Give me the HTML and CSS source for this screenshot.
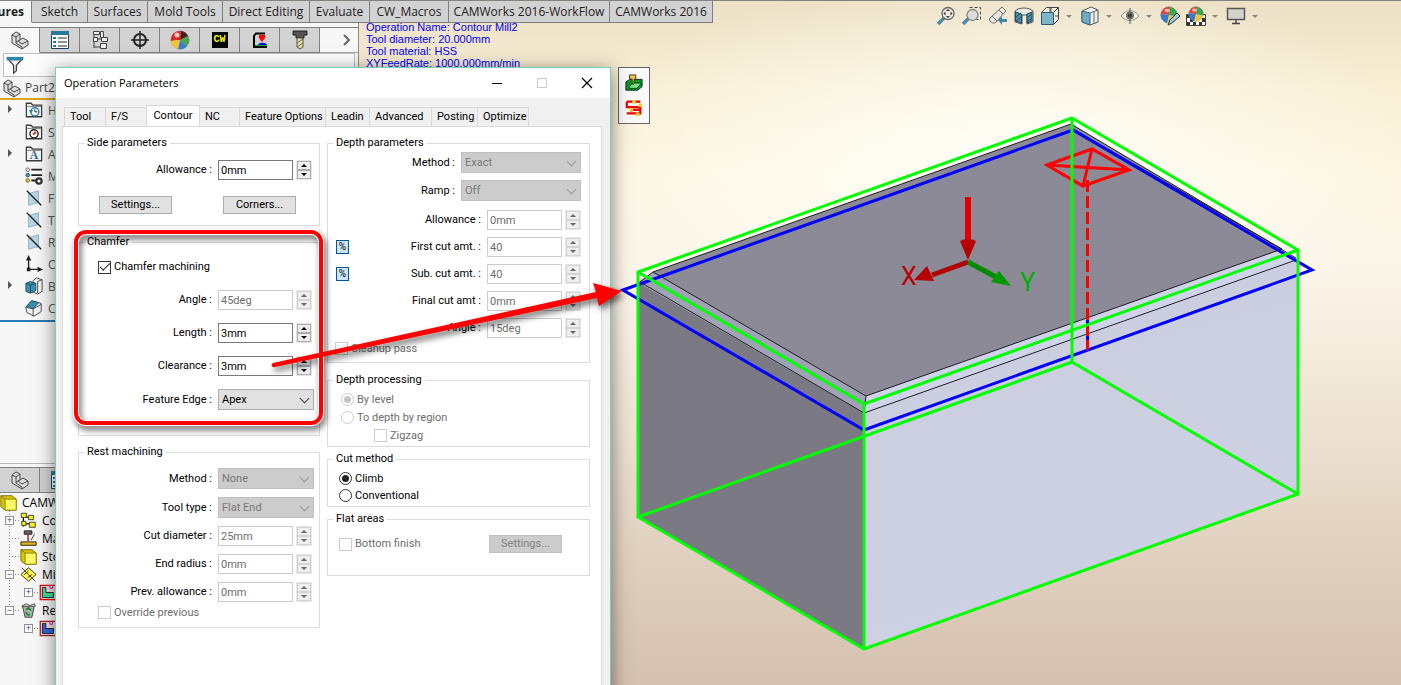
FILE: index.html
```html
<!DOCTYPE html>
<html lang="en">
<head>
    <meta charset="UTF-8">
    <title>Operation Parameters</title>
    <link rel="stylesheet" href="styles.css">
</head>
<body>
<!-- shared icons -->
<svg class="defs" aria-hidden="true">
    <symbol id="i-part" viewBox="0 0 20 20">
        <path d="M2 5l4-3 4 2v6l3-2 5 3v4l-6 4-10-6z" fill="#dcdcdc" stroke="#4a4a4a" stroke-linejoin="round"/>
        <path d="M2 5l4 2v6l6 4v2M6 7l4-3M6 12l4-2M12 14l6-3M12 14l-4-3" fill="none" stroke="#4a4a4a"/>
    </symbol>
    <symbol id="i-list" viewBox="0 0 20 20">
        <path d="M1.500 1.500h17v17h-17z" fill="#fff" stroke="#1d4257"/>
        <path d="M1 1h18v4H1z" fill="#2a7899"/>
        <path d="M3 7h3v2H3zM3 11h3v2H3zM3 15h3v2H3z" fill="#2a7899"/>
        <path d="M8 8h9M8 12h9M8 16h9" stroke="#222"/>
    </symbol>
    <symbol id="i-plane" viewBox="0 0 20 20">
        <path d="M4 5l11-3v13L4 18z" fill="#b9d5e4" stroke="#86b2c9"/>
        <path d="M2 2l16 16" stroke="#222" stroke-width="1.500"/>
    </symbol>
    <symbol id="i-folder" viewBox="0 0 20 20">
        <path d="M1.500 17.500v-15h5l2 2h10v13z" fill="#f4f4f4" stroke="#3c3c3c" stroke-width="1.400"/>
        <path d="M2 6h16" stroke="#777"/>
    </symbol>
    <symbol id="i-cube" viewBox="0 0 20 20">
        <path d="M1 2h13l5 4v13H6l-5-4z" fill="#d8c400" stroke="#6d6300"/>
        <path d="M6 6h13v13H6z" fill="#fffb66" stroke="#8a7d00"/>
        <path d="M1 2l5 4" stroke="#6d6300"/>
    </symbol>
    <symbol id="i-mill" viewBox="0 0 20 20">
        <path d="M1.500 1.500h18v17h-18z" fill="#f4dede" stroke="currentColor" stroke-width="1.500"/>
        <path d="M4 4h4v6h9v6H4z" fill="var(--fill)" stroke="#111"/>
        <path d="M13 1v4h3V1" fill="none" stroke="#c0c"/>
    </symbol>
    <symbol id="i-ball" viewBox="0 0 20 20">
        <circle cx="10" cy="10" r="9" fill="#e8e8e8" stroke="#555" stroke-width=".6"/>
        <path d="M10 10L11 1a9 9 0 0 0-10 8z" fill="#d9483c"/>
        <path d="M10 10L1 9a9 9 0 0 0 7 10z" fill="#3978ce"/>
        <path d="M10 10l-2 9a9 9 0 0 0 11-7z" fill="#e5c63c"/>
        <path d="M10 10l9 2A9 9 0 0 0 11 1z" fill="#3fa648"/>
        <ellipse cx="8" cy="5" rx="3" ry="2" fill="#fff" opacity=".6"/>
    </symbol>
</svg>

<div class="app">
    <header class="top">
        <nav class="ribbon">
            <a href="#" class="ribbon-tab active">ures</a>
            <a href="#" class="ribbon-tab">Sketch</a>
            <a href="#" class="ribbon-tab">Surfaces</a>
            <a href="#" class="ribbon-tab">Mold Tools</a>
            <a href="#" class="ribbon-tab">Direct Editing</a>
            <a href="#" class="ribbon-tab">Evaluate</a>
            <a href="#" class="ribbon-tab">CW_Macros</a>
            <a href="#" class="ribbon-tab">CAMWorks 2016-WorkFlow</a>
            <a href="#" class="ribbon-tab">CAMWorks 2016</a>
        </nav>
        <div class="view-tools">
            <button class="tool" aria-label="Zoom to fit">
                <svg viewBox="0 0 20 20"><path d="M2 18l6-6" stroke="#4d8ba6" stroke-width="3.500"/><circle cx="12" cy="7.500" r="6" fill="#eee9da" stroke="#6b6b66" stroke-width="1.300"/><path d="M12 3l2 2h-4zM12 12l2-2h-4zM7.500 7.500l2-2v4zM16.500 7.500l-2-2v4z" fill="#333"/></svg>
            </button>
            <button class="tool" aria-label="Zoom to area">
                <svg viewBox="0 0 20 20"><path d="M7.500 1.500h11v12h-4" fill="none" stroke="#444" stroke-dasharray="3 2"/><path d="M1 18l6-6" stroke="#4d8ba6" stroke-width="3.500"/><circle cx="10.500" cy="9" r="5.500" fill="#d9dcda" stroke="#85857f" stroke-width="1.300"/></svg>
            </button>
            <button class="tool" aria-label="Previous view">
                <svg viewBox="0 0 20 20"><path d="M2 12L14 1l4 4L8 16c-3 3-8-1-6-4z" fill="#e8e6de" stroke="#6b6b66"/><path d="M11 4l4 4M4 10l5 5" stroke="#6b6b66"/><path d="M10 14l4-4v3h5v3h-5v3z" fill="#3f87a6"/></svg>
            </button>
            <button class="tool" aria-label="Section view">
                <svg viewBox="0 0 20 20"><path d="M1 5c4-4 14-4 18 0v11l-6 2V9H8v9l-7-2z" fill="#e9e9e4" stroke="#555"/><path d="M1.500 6l6 2v9l-6-2zM13 8l5-2v9l-5 2z" fill="#4c93b2" stroke="#234b5e"/><path d="M2 11l5-4M2 15l5-4M13 12l5-4M13 16l5-4" stroke="#234b5e"/></svg>
            </button>
            <button class="tool" aria-label="View orientation">
                <svg viewBox="0 0 20 20"><path d="M1.500 6.500l5-5h12v12l-5 5M13.500 6.500l5-5M10 2v5M15 10h4M11 2v16" fill="#f7f2e2" stroke="#444"/><path d="M1.500 6.500h12v12h-12z" fill="#7db5cb" stroke="#2a5c72"/></svg>
            </button>
            <span class="caret"></span>
            <button class="tool" aria-label="Display style">
                <svg viewBox="0 0 20 20"><path d="M2 5l9-4 7 3v12l-8 3-8-3z" fill="#eef2f3" stroke="#555"/><path d="M2 5l8 2v12l-8-3z" fill="#6facc5" stroke="#3a6679"/><path d="M10 7l8-3M14 6v12" stroke="#666"/></svg>
            </button>
            <span class="caret"></span>
            <button class="tool" aria-label="Hide and show items">
                <svg viewBox="0 0 20 20"><path d="M1 10c5-7 13-7 18 0-5 6-13 6-18 0z" fill="#f1efe8" stroke="#99948a"/><circle cx="10" cy="9.500" r="4" fill="#77746d"/><circle cx="10" cy="9.500" r="2" fill="#33312d"/><path d="M10 2v16" stroke="#555"/></svg>
            </button>
            <span class="caret"></span>
            <button class="tool" aria-label="Edit appearance">
                <svg viewBox="0 0 20 20"><use href="#i-ball" width="18" height="18"/><path d="M8 19l2-5 7-7 3 3-8 7z" fill="#9ecbe0" stroke="#333"/></svg>
            </button>
            <button class="tool" aria-label="Apply scene">
                <svg viewBox="0 0 20 20"><path d="M.500 8.500h19v11H.500z" fill="#fff" stroke="#444"/><path d="M1 9h3v3H1zM4 12h3v4H4zM1 16h3v3H1zM7 16h3v3H7zM13 16h3v3h-3zM16 12h3v4h-3zM13 9h3v3h-3z" fill="#333"/><use href="#i-ball" x="2" width="16" height="16"/></svg>
            </button>
            <span class="caret"></span>
            <button class="tool" aria-label="View settings">
                <svg viewBox="0 0 20 20"><path d="M1.500 2.500h17v11h-17z" fill="#d3d2cc" stroke="#555" stroke-width="1.400"/><path d="M10 14v3M6 17.500h8" stroke="#444" stroke-width="1.500"/></svg>
            </button>
            <span class="caret"></span>
        </div>
    </header>

    <div class="work">
        <aside class="sidebar">
            <section class="feature-panel">
                <div class="panel-tabs">
                    <button class="panel-tab active" aria-label="Feature tree"><svg><use href="#i-part"/></svg></button>
                    <button class="panel-tab" aria-label="Properties"><svg><use href="#i-list"/></svg></button>
                    <button class="panel-tab" aria-label="Configurations">
                        <svg viewBox="0 0 20 20"><path d="M4 2v16M4 3h5M4 9h8M4 17h7" stroke="#444" fill="none"/><path d="M3.500 1.500h6v3h-6zM10.500 1.500h3v6h-3zM3.500 7.500h4v4h-4zM11.500 7.500h6v4h-6zM10.500 13.500h6v5h-6z" fill="#eee" stroke="#444"/></svg>
                    </button>
                    <button class="panel-tab" aria-label="Dimensions">
                        <svg viewBox="0 0 20 20"><circle cx="10" cy="10" r="6" fill="none" stroke="#222" stroke-width="2"/><path d="M10 1v18M1 10h18" stroke="#222" stroke-width="1.500"/></svg>
                    </button>
                    <button class="panel-tab" aria-label="Display"><svg viewBox="0 0 20 20"><circle cx="10" cy="10" r="9" fill="#eee" stroke="#666" stroke-width=".6"/><path d="M10 10L1 11a9 9 0 0 1 10-10z" fill="#d92a20"/><path d="M10 10l-9 1a9 9 0 0 0 7 8z" fill="#efc62c"/><path d="M10 10l-2 9a9 9 0 0 0 9-3z" fill="#3b7ecb"/><path d="M10 10l7 6a9 9 0 0 0 1-10z" fill="#4aa74e"/><path d="M10 10l8-4a9 9 0 0 0-7-5z" fill="#4a1a18"/><circle cx="7" cy="5" r="2.500" fill="#fff" opacity=".7"/></svg></button>
                    <button class="panel-tab" aria-label="CAM features"><span class="cw">CW</span></button>
                    <button class="panel-tab" aria-label="CAM operations">
                        <svg viewBox="0 0 20 20"><path d="M2 2h16v16H2z" fill="#d0d0d0"/><path d="M15 3.500H6L4 6v11h13" fill="none" stroke="#000" stroke-width="2"/><path d="M9 5h6v3l-3 4-3-4z" fill="#f00"/><path d="M8 15c1-3 8-3 9 0z" fill="#00f"/><path d="M5 15.500h12" stroke="#0b0" stroke-width="1"/></svg>
                    </button>
                    <button class="panel-tab" aria-label="CAM tools">
                        <svg viewBox="0 0 20 20"><path d="M3 1h14v4h-3v3H6V5H3z" fill="#555" stroke="#222"/><path d="M7 8h6v9l-3 2-3-2z" fill="#e8dfa5" stroke="#554"/><path d="M7 13l6-4M7 17l6-4" stroke="#665"/></svg>
                    </button>
                    <button class="more" aria-label="More"><svg viewBox="0 0 10 12"><path d="M2 1l5 5-5 5" fill="none" stroke="#666" stroke-width="2"/></svg></button>
                </div>
                <div class="filter">
                    <svg viewBox="0 0 20 20"><path d="M1.500 2.500h17l-7 8v6l-3 2.500v-8.500z" fill="#f4f4f4" stroke="#333" stroke-width="1.300"/><path d="M1 1h18v4H1z" fill="#2f86a8"/></svg>
                </div>
                <div class="part-name"><svg><use href="#i-part"/></svg>Part2</div>
                <ul class="tree">
                    <li><i class="expand"></i><svg viewBox="0 0 20 20"><use href="#i-folder"/><circle cx="11" cy="12" r="4.500" fill="#fff" stroke="#2f86a8" stroke-width="1.500"/><path d="M11 9v3h3" fill="none" stroke="#222"/><path d="M4 10l3 4 2-4z" fill="#2f86a8"/></svg>H</li>
                    <li><i></i><svg viewBox="0 0 20 20"><use href="#i-folder"/><circle cx="10" cy="12" r="4.500" fill="#fff" stroke="#222" stroke-width="1.500"/><path d="M9 13l3-3" stroke="#d22" stroke-width="2"/></svg>S</li>
                    <li><i class="expand"></i><svg viewBox="0 0 20 20"><use href="#i-folder"/><text x="10" y="16" class="glyph">A</text></svg>A</li>
                    <li><i></i><svg viewBox="0 0 20 20"><path d="M7 3h12M7 9h12M7 15h5" stroke="#222" stroke-width="2"/><circle cx="3" cy="3" r="2" fill="#fff" stroke="#555"/><circle cx="3" cy="9" r="2" fill="#49a3c9" stroke="#246"/><circle cx="3" cy="15" r="2" fill="#e5b816" stroke="#863"/><circle cx="15.500" cy="15.500" r="3" fill="none" stroke="#333" stroke-width="2.500"/></svg>M</li>
                    <li><i></i><svg><use href="#i-plane"/></svg>F</li>
                    <li><i></i><svg><use href="#i-plane"/></svg>T</li>
                    <li><i></i><svg><use href="#i-plane"/></svg>R</li>
                    <li><i></i><svg viewBox="0 0 20 20"><path d="M4 4v12h12" fill="none" stroke="#222" stroke-width="1.500"/><path d="M4 0l3 6H1zM20 16l-6-3v6zM2 14h4v4H2z" fill="#222"/></svg>O</li>
                    <li><i class="expand"></i><svg viewBox="0 0 20 20"><path d="M9 4l4-3 6 2v13l-5 3-5-2z" fill="#f2f2f2" stroke="#444"/><path d="M14 5v13M14 5l5-2" stroke="#444"/><path d="M1 7l5-2 6 2v8l-6 3-5-2z" fill="#3b8cad" stroke="#1d4d62"/><path d="M1 7l5 2v9M6 9l6-2" fill="none" stroke="#1d4d62"/></svg>B</li>
                    <li><i></i><svg viewBox="0 0 20 20"><path d="M1 9l7-7 10 3v9l-8 5-8-4z" fill="#f1f1f1" stroke="#444"/><path d="M1 9l6-7 8 2-6 7z" fill="#3b8cad" stroke="#1d4d62"/><path d="M9 11l9-5M9 11v8" stroke="#444"/></svg>C</li>
                </ul>
            </section>
            <section class="cam-panel">
                <div class="panel-tabs lower">
                    <button class="panel-tab" aria-label="Feature tree"><svg><use href="#i-part"/></svg></button>
                    <button class="panel-tab" aria-label="Properties"><svg><use href="#i-list"/></svg></button>
                </div>
                <ul class="cam-tree">
                    <li class="root"><svg><use href="#i-cube"/></svg>CAMW</li>
                    <li><button class="pm" aria-label="Expand">+</button><svg viewBox="0 0 20 20"><path d="M4 3v14M4 6h6M4 14h7" stroke="#111" stroke-width="1.500"/><path d="M1.500 1.500h6v5h-6zM10 4h6v5h-6zM2 11h5v5H2zM11 12h7v6h-7z" fill="#f6ee1b" stroke="#333"/></svg>Co</li>
                    <li><i></i><svg viewBox="0 0 20 20"><path d="M5 1h9v4H5z" fill="#666" stroke="#111"/><path d="M9.500 5v8" stroke="#c33" stroke-width="2"/><path d="M1 14h18v4H1z" fill="#e5b31a" stroke="#111"/><path d="M13 12l4-7" stroke="#222"/></svg>Ma</li>
                    <li><i></i><svg><use href="#i-cube"/></svg>Sto</li>
                    <li><button class="pm" aria-label="Collapse">−</button><svg viewBox="0 0 20 20"><path d="M10 2l9 8-9 8-9-8z" fill="#fff34a" stroke="#222"/><path d="M2 2l16 16M5 10l5-4M9 14l5-4" stroke="#222"/></svg>Mi</li>
                    <li class="child"><button class="pm" aria-label="Expand">+</button><svg class="mill-green"><use href="#i-mill"/></svg></li>
                    <li><button class="pm" aria-label="Collapse">−</button><svg viewBox="0 0 20 20"><path d="M3 5l14-1-3 14H6z" fill="#a9b0ac" stroke="#333"/><path d="M2 5l5-3 5 2 5-2 1 3z" fill="#ddd" stroke="#444"/><path d="M7 9l3-2 3 3M7 12l2 3h3" fill="none" stroke="#12862a" stroke-width="2"/></svg>Re</li>
                    <li class="child"><button class="pm" aria-label="Expand">+</button><svg class="mill-blue"><use href="#i-mill"/></svg></li>
                </ul>
            </section>
        </aside>

        <main class="canvas">
            <p class="op-info">Operation Name: Contour Mill2<br>Tool diameter: 20.000mm<br>Tool material: HSS<br>XYFeedRate: 1000.000mm/min</p>
            <div class="mini-tools">
                <button class="tool" aria-label="Save toolpath"><svg viewBox="0 0 20 20"><path d="M1 9l4-3h14v8l-5 4H1z" fill="#0a9a20" stroke="#022"/><path d="M5 14l3-4h9v2l-4 4H5z" fill="#7be27f" stroke="#032"/><path d="M5 1h7v4l-2 1v4l-1 2-1-2V6L5 5z" fill="#e9c14c" stroke="#431"/></svg></button>
                <button class="tool" aria-label="Step through"><svg viewBox="0 0 20 20"><path d="M2 3h15M2 3v6h15v7H2M2 16h15M17 12H7v2" fill="none" stroke="#e00" stroke-width="2.500"/><path d="M8 1h4v4H8zM15 5h4v4h-4zM5 10h4v4H5zM12 15h4v4h-4z" fill="#e8cf25"/></svg></button>
            </div>
        </main>
    </div>

    <!-- stock block, toolpath and axes -->
    <svg class="scene" viewBox="0 0 1401 685">
        <defs>
            <linearGradient id="frontFace" x1="0" y1="0" x2="0.300" y2="1">
                <stop offset="0" stop-color="#cbcddd"/><stop offset="1" stop-color="#cdd1e3"/>
            </linearGradient>
        </defs>
        <path d="M638 282L864 413V649L638 517z" fill="#7a7984"/>
        <path d="M864 413L1298 260V494L864 649z" fill="url(#frontFace)"/>
        <path d="M638 282L653 272L866 396L864 413z" fill="#a0a2b6"/>
        <path d="M866 396L1282 249L1298 260L864 413z" fill="#d0d4ea"/>
        <path d="M653 272L1071 124L1282 249L866 396z" fill="#8b8a96"/>
        <g fill="none" stroke="#1c1c22">
            <path d="M640 282L653 272L1071 124L1296 258"/>
            <path d="M1071 128L1282 249L866 396L653 272"/>
            <path d="M640 282L864 413L1296 260M866 396L864 413"/>
        </g>
        <g fill="none" stroke="#0000fb" stroke-width="3">
            <path d="M623 290L1073 130L1312 270L864 430z"/>
            <path d="M1087.500 318V350"/>
        </g>
        <g fill="none" stroke="#f00" stroke-width="3">
            <path d="M1047 165L1092 149L1129 170L1083 186zM1047 165L1129 170M1092 149L1083 186"/>
            <path d="M1087.500 180V350" stroke-dasharray="12 4"/>
        </g>
        <g fill="none" stroke="#0f0" stroke-width="3" stroke-linejoin="round">
            <path d="M638 272L1072 118L1298 250L864 404z"/>
            <path d="M638 517L1072 362L1298 494L864 649z"/>
            <path d="M638 272V517M1072 118V362M1298 250V494M864 404V649"/>
        </g>
        <path d="M968 262L932 275" stroke="#b00000" stroke-width="5"/>
        <path d="M914 280L927 266L934 281z" fill="#b80000"/>
        <path d="M968 262L996 277" stroke="#008a00" stroke-width="5"/>
        <path d="M1011 286L999 271L991 282z" fill="#009a00"/>
        <path d="M968 197V242" stroke="#e40000" stroke-width="6"/>
        <path d="M960 241Q968 237 976 241L968 260z" fill="#b80000"/>
        <text x="901" y="285" class="axis axis-x">X</text>
        <text x="1020" y="291" class="axis axis-y">Y</text>
    </svg>

    <form class="dialog">
        <div class="title-bar">
            <h1>Operation Parameters</h1>
            <button type="button" class="win-btn" aria-label="Minimize"><svg viewBox="0 0 12 12"><path d="M1 6.500h10" stroke="#000"/></svg></button>
            <button type="button" class="win-btn" aria-label="Maximize" disabled><svg viewBox="0 0 12 12"><path d="M1.500 1.500h9v9h-9z" fill="none" stroke="#c8c8c8"/></svg></button>
            <button type="button" class="win-btn" aria-label="Close"><svg viewBox="0 0 12 12"><path d="M1 1l10 10M11 1L1 11" stroke="#000" stroke-width="1.200"/></svg></button>
        </div>
        <div class="dialog-body">
            <div class="tabs">
                <button type="button">Tool</button>
                <button type="button">F/S</button>
                <button type="button" class="active">Contour</button>
                <button type="button">NC</button>
                <button type="button">Feature Options</button>
                <button type="button">Leadin</button>
                <button type="button">Advanced</button>
                <button type="button">Posting</button>
                <button type="button">Optimize</button>
            </div>
            <div class="page">
                <div class="col">
                    <fieldset class="side">
                        <legend>Side parameters</legend>
                        <div class="row">
                            <label for="sideAllow">Allowance :</label>
                            <div class="field"><input type="text" id="sideAllow" value="0mm"><span class="spin"><button type="button" aria-label="Up"></button><button type="button" aria-label="Down"></button></span></div>
                        </div>
                        <div class="buttons">
                            <button type="button" class="btn">Settings...</button>
                            <button type="button" class="btn">Corners...</button>
                        </div>
                    </fieldset>
                    <fieldset class="chamfer">
                        <legend>Chamfer</legend>
                        <div class="rows">
                            <label class="check"><input type="checkbox" checked>Chamfer machining</label>
                            <div class="row">
                                <label for="chAngle">Angle :</label>
                                <div class="field"><input type="text" id="chAngle" value="45deg" disabled><span class="spin off"><button type="button" aria-label="Up" disabled></button><button type="button" aria-label="Down" disabled></button></span></div>
                            </div>
                            <div class="row">
                                <label for="chLength">Length :</label>
                                <div class="field"><input type="text" id="chLength" value="3mm"><span class="spin"><button type="button" aria-label="Up"></button><button type="button" aria-label="Down"></button></span></div>
                            </div>
                            <div class="row">
                                <label for="chClear">Clearance :</label>
                                <div class="field"><input type="text" id="chClear" value="3mm"><span class="spin"><button type="button" aria-label="Up"></button><button type="button" aria-label="Down"></button></span></div>
                            </div>
                            <div class="row">
                                <label for="chEdge">Feature Edge :</label>
                                <div class="field select"><select id="chEdge"><option>Apex</option></select></div>
                            </div>
                        </div>
                    </fieldset>
                    <fieldset class="rest">
                        <legend>Rest machining</legend>
                        <div class="rows">
                            <div class="row">
                                <label for="rmMethod">Method :</label>
                                <div class="field select off"><select id="rmMethod" disabled><option>None</option></select></div>
                            </div>
                            <div class="row">
                                <label for="rmTool">Tool type :</label>
                                <div class="field select off"><select id="rmTool" disabled><option>Flat End</option></select></div>
                            </div>
                            <div class="row">
                                <label for="rmCut">Cut diameter :</label>
                                <div class="field"><input type="text" id="rmCut" value="25mm" disabled><span class="spin off"><button type="button" aria-label="Up" disabled></button><button type="button" aria-label="Down" disabled></button></span></div>
                            </div>
                            <div class="row">
                                <label for="rmEnd">End radius :</label>
                                <div class="field"><input type="text" id="rmEnd" value="0mm" disabled><span class="spin off"><button type="button" aria-label="Up" disabled></button><button type="button" aria-label="Down" disabled></button></span></div>
                            </div>
                            <div class="row">
                                <label for="rmPrev">Prev. allowance :</label>
                                <div class="field"><input type="text" id="rmPrev" value="0mm" disabled><span class="spin off"><button type="button" aria-label="Up" disabled></button><button type="button" aria-label="Down" disabled></button></span></div>
                            </div>
                        </div>
                        <label class="check off"><input type="checkbox" disabled>Override previous</label>
                    </fieldset>
                </div>

                <div class="col">
                    <fieldset class="depth">
                        <legend>Depth parameters</legend>
                        <div class="rows">
                            <div class="row">
                                <label for="dpMethod">Method :</label>
                                <div class="field select wide off"><select id="dpMethod" disabled><option>Exact</option></select></div>
                            </div>
                            <div class="row">
                                <label for="dpRamp">Ramp :</label>
                                <div class="field select wide off"><select id="dpRamp" disabled><option>Off</option></select></div>
                            </div>
                        </div>
                        <div class="rows amounts">
                            <div class="row">
                                <label for="dpAllow">Allowance :</label>
                                <div class="field"><input type="text" id="dpAllow" value="0mm" disabled><span class="spin off"><button type="button" aria-label="Up" disabled></button><button type="button" aria-label="Down" disabled></button></span></div>
                            </div>
                            <div class="row">
                                <button type="button" class="pct">%</button>
                                <label for="dpFirst">First cut amt. :</label>
                                <div class="field"><input type="text" id="dpFirst" value="40" disabled><span class="spin off"><button type="button" aria-label="Up" disabled></button><button type="button" aria-label="Down" disabled></button></span></div>
                            </div>
                            <div class="row">
                                <button type="button" class="pct">%</button>
                                <label for="dpSub">Sub. cut amt. :</label>
                                <div class="field"><input type="text" id="dpSub" value="40" disabled><span class="spin off"><button type="button" aria-label="Up" disabled></button><button type="button" aria-label="Down" disabled></button></span></div>
                            </div>
                            <div class="row">
                                <label for="dpFinal">Final cut amt :</label>
                                <div class="field"><input type="text" id="dpFinal" value="0mm" disabled><span class="spin off"><button type="button" aria-label="Up" disabled></button><button type="button" aria-label="Down" disabled></button></span></div>
                            </div>
                            <div class="row">
                                <label for="dpAngle">Angle :</label>
                                <div class="field"><input type="text" id="dpAngle" value="15deg" disabled><span class="spin off"><button type="button" aria-label="Up" disabled></button><button type="button" aria-label="Down" disabled></button></span></div>
                            </div>
                        </div>
                        <label class="check off"><input type="checkbox" disabled>Cleanup pass</label>
                    </fieldset>
                    <fieldset class="processing">
                        <legend>Depth processing</legend>
                        <label class="check off"><input type="radio" name="proc" checked disabled>By level</label>
                        <label class="check off"><input type="radio" name="proc" disabled>To depth by region</label>
                        <label class="check off indent"><input type="checkbox" disabled>Zigzag</label>
                    </fieldset>
                    <fieldset class="cut">
                        <legend>Cut method</legend>
                        <label class="check"><input type="radio" name="cut" checked>Climb</label>
                        <label class="check"><input type="radio" name="cut">Conventional</label>
                    </fieldset>
                    <fieldset class="flat">
                        <legend>Flat areas</legend>
                        <div class="flat-row">
                            <label class="check off"><input type="checkbox" disabled>Bottom finish</label>
                            <button type="button" class="btn" disabled>Settings...</button>
                        </div>
                    </fieldset>
                </div>
            </div>
        </div>
    </form>

    <!-- callout frame and arrow -->
    <svg class="callout" viewBox="0 0 1401 685">
        <rect x="76" y="232" width="245" height="191" rx="10" fill="none" stroke="#fff" stroke-width="6"/>
        <rect x="76" y="232" width="245" height="191" rx="10" fill="none" stroke="#f00" stroke-width="4"/>
        <path d="M273 363L596 292L593 283L622 291L599 306L597 298L275 367A2 2 0 0 1 273 363z" fill="#f00"/>
    </svg>
</div>
</body>
</html>
```
FILE: styles.css
```css
*{
    box-sizing: border-box;
}
body{
    margin: 0;
    font-family: "Open Sans", "Noto Sans", sans-serif;
    font-size: 12px;
    color: #222;
}
button{
    font: inherit;
    color: inherit;
    padding: 0;
    border: 0;
    background: none;
}
ul{
    list-style: none;
    margin: 0;
    padding: 0;
}
.defs{
    position: absolute;
    width: 0;
    height: 0;
}
.app{
    position: relative;
    display: flex;
    flex-direction: column;
    height: 100vh;
    overflow: hidden;
    border-top: 1px solid #85837f;
    background:
        radial-gradient(ellipse 420px 190px at 1000px 160px, rgba(255,255,250,.9), rgba(255,255,250,0)),
        linear-gradient(#ece0c5, #f8efd5 13%, #fdf6e2 25%, #fcf6ea 38%, #efe4d4 60%, #e0cfbe 82%, #d5c1b0);
}

/* top bar */
.top{
    display: flex;
    height: 22px;
}
.ribbon{
    display: grid;
    grid-template-columns: 32px 56px 60px 75px 87px 60px 79px 161px 103px;
}
.ribbon-tab{
    display: flex;
    align-items: center;
    justify-content: center;
    color: #222;
    text-decoration: none;
    white-space: nowrap;
    background: #d2d2d2;
    border-right: 1px solid #7f7f7f;
    border-bottom: 1px solid #7f7f7f;
}
.ribbon-tab.active{
    justify-content: flex-end;
    padding-right: 7px;
    font-weight: bold;
    background: #f7f7f7;
    border-bottom-color: #f7f7f7;
}
.view-tools{
    display: flex;
    align-items: center;
    height: 30px;
    margin-left: 220px;
}
.tool{
    width: 26px;
    height: 20px;
}
.tool svg{
    display: block;
    width: 20px;
    height: 20px;
    margin: 0 auto;
}
.caret{
    width: 14px;
}
.caret::after{
    content: "";
    display: block;
    width: 0;
    margin-left: 3px;
    border: 3px solid transparent;
    border-top-color: #8d887d;
    border-bottom: 0;
}

/* side panel */
.work{
    display: flex;
    flex: 1;
    min-height: 0;
}
.sidebar{
    display: flex;
    flex-direction: column;
    width: 359px;
    background: #f7f7f7;
    border-right: 1px solid #8a8a8a;
}
.feature-panel{
    height: 440px;
    padding-top: 4px;
}
.panel-tabs{
    display: flex;
    height: 26px;
    border-top: 1px solid #7f7f7f;
}
.panel-tab{
    display: flex;
    align-items: center;
    justify-content: center;
    width: 40px;
    background: #d2d2d2;
    border-right: 1px solid #7f7f7f;
    border-bottom: 1px solid #7f7f7f;
}
.panel-tab.active{
    background: #f7f7f7;
    border-bottom-color: #f7f7f7;
}
.panel-tab svg{
    width: 20px;
    height: 20px;
}
.cw{
    width: 16px;
    height: 16px;
    background: #000;
    color: #ff0;
    font: bold 10px/16px "Liberation Mono", monospace;
}
.more{
    flex: 1;
    padding: 2px 6px 0 0;
    text-align: right;
    border-bottom: 1px solid #a8a8a8;
}
.more svg{
    width: 10px;
    height: 12px;
}
.filter{
    height: 24px;
    margin: 0 3px;
    padding: 2px;
    background: #fcfcfc;
    border: 1px solid #bfbfbf;
}
.filter svg{
    width: 18px;
    height: 18px;
}
.part-name{
    display: flex;
    align-items: center;
    gap: 3px;
    height: 23px;
    padding-left: 2px;
    color: #444;
    border-bottom: 2px solid #dca61b;
}
.part-name svg{
    width: 20px;
    height: 20px;
}
.tree{
    color: #555;
    border-bottom: 2px solid #2a7ab5;
}
.tree li{
    display: flex;
    align-items: center;
    height: 22px;
    padding: 0 0 2px 8px;
}
.tree svg{
    width: 18px;
    height: 18px;
    margin-right: 5px;
}
.tree i{
    width: 17px;
}
.tree .expand::after{
    content: "";
    display: block;
    width: 0;
    margin-bottom: 2px;
    border: 4px solid transparent;
    border-left-color: #555;
    border-right: 0;
}
.glyph{
    font: bold 13px "Liberation Serif", serif;
    fill: #2f6f93;
    text-anchor: middle;
}
.cam-panel{
    flex: 1;
    border-top: 1px solid #b5b5b5;
    padding-top: 3px;
}
.lower{
    background: #d2d2d2;
}
/* dotted connector lines of the tree */
.cam-tree{
    color: #000;
    background: repeating-linear-gradient(#888 0 1px, transparent 1px 3px) 9px 18px / 1px 100px no-repeat;
}
.cam-tree li{
    display: flex;
    align-items: center;
    height: 18px;
    padding-left: 5px;
    background: repeating-linear-gradient(90deg, #888 0 1px, transparent 1px 3px) 9px 9px / 12px 1px no-repeat;
}
.cam-tree li.root{
    padding-left: 0;
    background: none;
}
.cam-tree li.child{
    padding-left: 24px;
    background-position: 28px 9px;
}
.cam-tree svg{
    width: 17px;
    height: 17px;
    margin-right: 5px;
}
.cam-tree i{
    width: 15px;
}
.pm{
    width: 9px;
    height: 9px;
    margin-right: 6px;
    border: 1px solid #919191;
    background: #fff;
    color: #2b4c9c;
    font: 9px/7px "Liberation Sans", sans-serif;
}
.mill-green{
    color: #e00;
    --fill: #38e0a0;
}
.mill-blue{
    color: #a22;
    --fill: #2c64e0;
}

/* graphics area */
.canvas{
    display: flex;
    flex: 1;
    align-items: flex-start;
}
.op-info{
    width: 259px;
    margin: -2px 0 0;
    padding: 0 7px;
    font: 11px/12px "Liberation Sans", Arial, sans-serif;
    color: #00f;
}
.mini-tools{
    display: flex;
    flex-direction: column;
    gap: 5px;
    width: 32px;
    height: 57px;
    margin-top: 44px;
    padding: 5px 2px;
    background: #fafafa;
    border: 1px solid #666;
}
.mini-tools svg{
    width: 18px;
    height: 18px;
}
.scene,
.callout{
    position: absolute;
    top: -1px;
    left: 0;
    width: 1401px;
    height: 685px;
    pointer-events: none;
}
.callout{
    filter: drop-shadow(2px 4px 3px rgba(0,0,0,.6));
}
.axis{
    font: 25px Roboto, "Liberation Sans", sans-serif;
}
.axis-x{
    fill: #c00000;
}
.axis-y{
    fill: #00b000;
}

/* dialog window */
.dialog{
    position: absolute;
    top: 66px;
    left: 55px;
    display: flex;
    flex-direction: column;
    width: 556px;
    height: 640px;
    border: 1px solid #7fcdb3;
    background: #f0f0f0;
    box-shadow: 0 4px 18px rgba(0,0,0,.5);
    font: 11px/16px Roboto, "Liberation Sans", sans-serif;
    color: #000;
}
.title-bar{
    display: flex;
    align-items: center;
    height: 30px;
    padding-right: 1px;
    background: #fff;
}
.title-bar h1{
    flex: 1;
    margin: 0;
    padding-left: 8px;
    font: 11px/16px "Open Sans", "Noto Sans", sans-serif;
}
.win-btn{
    width: 45px;
    height: 30px;
}
.win-btn svg{
    display: block;
    width: 12px;
    height: 12px;
    margin: 0 auto;
}
.dialog-body{
    display: flex;
    flex-direction: column;
    flex: 1;
    padding: 9px 8px 0 6px;
}
.tabs{
    display: grid;
    grid-template-columns: 42px 41px 53px 40px 86px 44px 62px 46px 51px;
    height: 19px;
    padding-left: 2px;
}
.tabs button{
    padding-left: 5px;
    text-align: left;
    border: 1px solid #d9d9d9;
    border-width: 1px 1px 0 0;
    white-space: nowrap;
}
.tabs button:first-child{
    border-left-width: 1px;
}
.tabs .active{
    margin: -2px 0 -1px -1px;
    padding: 0 0 2px;
    text-align: center;
    border-left-width: 1px;
    background: #fff;
}
.page{
    display: flex;
    gap: 7px;
    flex: 1;
    padding: 8px 11px 0 15px;
    background: #fff;
    border: 1px solid #dcdcdc;
}
.col{
    display: flex;
    flex-direction: column;
    gap: 8px;
    flex: 242;
}
.col + .col{
    flex: 263;
    gap: 4px;
}
fieldset{
    min-width: 0;
    margin: 0;
    padding: 0;
    border: 1px solid #dcdcdc;
}
legend{
    margin-left: 5px;
    padding: 0 3px;
    line-height: 16px;
}
.rows{
    display: flex;
    flex-direction: column;
    gap: 8px;
}
.row{
    display: flex;
    align-items: center;
    justify-content: flex-end;
    padding-right: 5px;
}
.row label{
    padding-right: 6px;
}
.field{
    display: flex;
    gap: 3px;
    width: 96px;
}
.field input{
    width: 75px;
    height: 20px;
    padding: 0 2px;
    font: inherit;
    color: #000;
    background: #fff;
    border: 1px solid #7a7a7a;
}
.field input:disabled{
    color: #6d6d6d;
    border-color: #ccc;
}
.spin{
    display: flex;
    flex-direction: column;
    width: 16px;
    height: 20px;
    padding: 0;
    background: #f0f0f0;
    border: 1px solid #e6e6e6;
}
.spin button{
    flex: 1;
    border: 1px solid #adadad;
    background: #eee;
}
.spin.off button{
    border-color: #d4d4d4;
}
.spin button::after{
    content: "";
    display: block;
    width: 0;
    margin: 0 auto;
    border: 3px solid transparent;
    border-top: 0;
    border-bottom-color: #000;
}
.spin button:last-child::after{
    border-top: 3px solid #000;
    border-bottom: 0;
}
.spin.off button::after{
    border-bottom-color: #666;
}
.spin.off button:last-child::after{
    border-top-color: #666;
}
.select{
    position: relative;
}
.select select{
    appearance: none;
    width: 100%;
    height: 21px;
    padding: 0 3px;
    font: inherit;
    color: #000;
    background: #e1e1e1;
    border: 1px solid #adadad;
    border-radius: 0;
}
.select select:disabled{
    color: #787878;
    background: #ccc;
    border-color: #bfbfbf;
    opacity: 1;
}
.select::after{
    content: "";
    position: absolute;
    top: 6px;
    right: 6px;
    width: 6px;
    height: 6px;
    border: 1px solid #444;
    border-width: 0 1px 1px 0;
    transform: rotate(45deg);
}
.select.off::after{
    border-color: #999;
}
.wide{
    width: 120px;
}
.check{
    display: flex;
    align-items: center;
    gap: 3px;
    height: 13px;
}
.check.off{
    color: #6d6d6d;
}
.check input{
    appearance: none;
    display: grid;
    place-items: center;
    width: 13px;
    height: 13px;
    margin: 0;
    background: #fff;
    border: 1px solid #333;
}
.check input[type=radio]{
    border-radius: 50%;
}
.check input:disabled{
    border-color: #ccc;
}
.check input[type=checkbox]:checked::after{
    content: "";
    width: 9px;
    height: 4px;
    margin-bottom: 3px;
    border: 1px solid #222;
    border-width: 0 0 1px 1px;
    transform: rotate(-45deg);
}
.check input[type=radio]:checked::after{
    content: "";
    width: 7px;
    height: 7px;
    border-radius: 50%;
    background: #222;
}
.check input[type=radio]:disabled::after{
    background: #c4c4c4;
}
.btn{
    width: 73px;
    height: 18px;
    line-height: 16px;
    background: #e1e1e1;
    border: 1px solid #adadad;
}
.btn:disabled{
    color: #838383;
    background: #ccc;
    border-color: #bfbfbf;
}
.pct{
    width: 13px;
    height: 14px;
    margin: 0 auto 0 8px;
    font-size: 10px;
    line-height: 12px;
    background: #cce4f7;
    border: 1px solid #005499;
}
.side{
    padding: 9px 0 11px;
}
.buttons{
    display: flex;
    justify-content: space-between;
    padding: 16px 23px 0 20px;
}
.chamfer{
    padding: 7px 0 25px;
}
.chamfer .rows{
    gap: 13px;
}
.chamfer .check{
    height: 20px;
    padding-left: 19px;
}
.rest{
    padding: 8px 0 8px;
}
.rest > .check{
    margin: 4px 0 0 19px;
}
.depth{
    padding: 1px 0 7px;
    margin-bottom: 5px;
}
.depth .rows{
    gap: 7px;
}
.depth .row{
    padding-right: 8px;
}
.depth .field:not(.wide){
    width: 94px;
}
.depth .amounts{
    margin-top: 9px;
}
.depth > .check{
    margin: 4px 0 0 7px;
}
.processing{
    padding: 5px 0 4px;
}
.processing .check{
    margin-left: 13px;
}
.processing .check + .check{
    margin-top: 5px;
}
.processing .indent{
    padding-left: 33px;
}
.cut{
    padding: 5px 0 4px;
}
.cut .check{
    margin-left: 11px;
}
.cut .check + .check{
    margin-top: 4px;
}
.flat{
    padding: 8px 0 22px;
}
.flat-row{
    display: flex;
    align-items: center;
    justify-content: space-between;
    padding: 0 27px 0 11px;
}
```
